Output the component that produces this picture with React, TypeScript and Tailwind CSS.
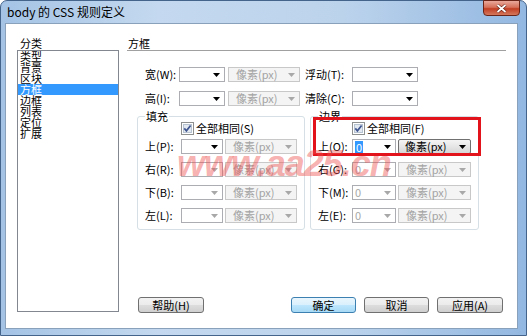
import React from "react";

function Arrow({ dis }: { dis?: boolean }) {
  return (
    <svg width="7" height="4" viewBox="0 0 7 4" className="shrink-0">
      <path d="M0 0H7L3.5 4Z" className={dis ? "fill-[#a8a8a8]" : "fill-black"} />
    </svg>
  );
}

function Combo({
  w,
  value,
  dis,
  sel,
}: {
  w: string;
  value?: string;
  dis?: boolean;
  sel?: boolean;
}) {
  return (
    <div
      className={`${w} h-[15px] border border-[#abadb3] bg-white flex items-center justify-between pl-[2px] pr-[4px] text-[11px] leading-[13px]`}
    >
      {sel ? (
        <span className="bg-[#3399ff] text-white px-[1px] h-[12px] leading-[12px]">0</span>
      ) : (
        <span className={dis ? "text-[#a8a8a8]" : "text-black"}>{value ?? ""}</span>
      )}
      <Arrow dis={dis} />
    </div>
  );
}

function Unit({ w, on }: { w: string; on?: boolean }) {
  return on ? (
    <div
      className={`${w} h-[15px] border border-[#707070] rounded-[2px] bg-[linear-gradient(to_bottom,#f4f4f4,#e6e6e6_50%,#d6d6d6)] flex items-center justify-between pl-[6px] pr-[4px] text-[11px] leading-[13px] text-black`}
    >
      <span>像素(px)</span>
      <Arrow />
    </div>
  ) : (
    <div
      className={`${w} h-[15px] border border-[#c8c8c8] bg-[#f4f4f4] flex items-center justify-between pl-[7px] pr-[4px] text-[11px] leading-[13px] text-[#a3a3a3]`}
    >
      <span>像素(px)</span>
      <Arrow dis />
    </div>
  );
}

function Check() {
  return (
    <svg width="13" height="13" viewBox="0 0 13 13" className="shrink-0">
      <rect x="0.5" y="0.5" width="12" height="12" fill="#fff" stroke="#8e8f8f" />
      <rect x="2.5" y="2.5" width="8" height="8" fill="#e3e9f0" stroke="#b7c3d1" />
      <path d="M3.3 6.4 L5.4 8.8 L9.6 3.4" stroke="#3f5590" strokeWidth="1.7" fill="none" />
    </svg>
  );
}

function Btn({ label, def }: { label: string; def?: boolean }) {
  return (
    <div
      className={`h-[16px] flex items-center justify-center rounded-[3px] border text-[11px] leading-[13px] text-black ${
        def
          ? "border-[#3c7fb1] bg-[linear-gradient(to_bottom,#eaf6fd,#d9f0fc_50%,#bee6fd_51%,#a7d9f5)]"
          : "border-[#707070] bg-[linear-gradient(to_bottom,#f2f2f2,#ebebeb_50%,#dddddd_51%,#cfcfcf)]"
      }`}
    >
      {label}
    </div>
  );
}

export default function App() {
  const items = ["类型", "背景", "区块", "方框", "边框", "列表", "定位", "扩展"];
  return (
    <div className="w-[527px] h-[336px] bg-white overflow-hidden font-['Noto_Sans_CJK_SC','Liberation_Sans',sans-serif]">
      <div className="relative w-[527px] h-[336px] flex flex-col rounded-t-[7px] border border-[#44648c] bg-[linear-gradient(to_right,#a4c3e5,#c4d9ef_30%,#bcd3ec_65%,#93b8e1)]">
        {/* title bar */}
        <div className="h-[22px] flex items-start pl-[6px] pr-[6px] shrink-0">
          <div className="pt-[3px] text-[12px] leading-[16px] text-black">body 的 CSS 规则定义</div>
          <div className="ml-auto w-[37px] h-[16px] -mt-px rounded-b-[4px] border border-[#6b2418] bg-[linear-gradient(to_bottom,#e9a99b,#d6705a_45%,#c23f23_55%,#d4785c)] flex items-center justify-center">
            <svg width="11" height="9" viewBox="0 0 11 9">
              <path d="M1.5 1 L9.5 8 M9.5 1 L1.5 8" stroke="#5a1a10" strokeWidth="3" />
              <path d="M1.5 1 L9.5 8 M9.5 1 L1.5 8" stroke="#ffffff" strokeWidth="1.8" />
            </svg>
          </div>
        </div>
        {/* body */}
        <div className="pl-[4px] pr-[8px] pb-[6px] flex-1 flex">
          <div className="flex-1 bg-white border border-[#8aa1bb] flex pl-[11px] pt-[12px]">
            {/* left */}
            <div className="w-[102px] flex flex-col">
              <div className="h-[14px] text-[11px] leading-[14px] pl-[3px] text-black">分类</div>
              <div className="h-[262px] border border-[#828790] bg-white text-[11px] leading-[11px]">
                {items.map((it, i) => (
                  <div
                    key={it}
                    className={`h-[11px] pl-[2px] ${i === 3 ? "bg-[#3399ff] text-white" : "text-black"}`}
                  >
                    {it}
                  </div>
                ))}
              </div>
            </div>
            {/* right */}
            <div className="ml-[8px] w-[379px] h-[277px] flex flex-col text-[11px] leading-[13px] text-black">
              <div className="h-[15px] border-b border-[#a0a0a0] pl-px text-[11px] leading-[14px]">方框</div>
              <div className="mt-[16px] flex items-center pl-[18px] h-[15px]">
                <div className="w-[34px]">宽(W):</div>
                <Combo w="w-[46px]" />
                <div className="ml-[3px]"><Unit w="w-[72px]" /></div>
                <div className="ml-[5px] w-[47px]">浮动(T):</div>
                <Combo w="w-[66px]" />
              </div>
              <div className="mt-[9px] flex items-center pl-[18px] h-[15px]">
                <div className="w-[34px]">高(I):</div>
                <Combo w="w-[46px]" />
                <div className="ml-[3px]"><Unit w="w-[72px]" /></div>
                <div className="ml-[5px] w-[47px]">清除(C):</div>
                <Combo w="w-[66px]" />
              </div>
              <div className="mt-[4px] ml-[10px] flex gap-[5px]">
                {/* padding */}
                <fieldset className="w-[165px] border border-[#d5dfe5] rounded-[3px] px-[7px] pb-[6px]">
                  <legend className="px-[1px] text-[11px] leading-[12px]">填充</legend>
                  <div className="h-[13px] flex items-center pl-[36px] gap-[2px]">
                    <Check />
                    <span>全部相同(S)</span>
                  </div>
                  <div className="mt-[4px] flex flex-col gap-[8px]">
                    {[
                      ["上(P):", false],
                      ["右(R):", true],
                      ["下(B):", true],
                      ["左(L):", true],
                    ].map(([l, d]) => (
                      <div key={l as string} className="flex items-center h-[15px]">
                        <div className="w-[36px]">{l as string}</div>
                        <Combo w="w-[42px]" dis={d as boolean} />
                        <div className="ml-[2px]"><Unit w="w-[72px]" /></div>
                      </div>
                    ))}
                  </div>
                </fieldset>
                {/* margin */}
                <fieldset className="w-[165px] border border-[#d5dfe5] rounded-[3px] px-[7px] pb-[6px]">
                  <legend className="px-[1px] text-[11px] leading-[12px]">边界</legend>
                  <div className="relative">
                    <div className="h-[13px] flex items-center pl-[34px] gap-[2px]">
                      <Check />
                      <span>全部相同(F)</span>
                    </div>
                    <div className="mt-[4px] flex items-center h-[15px]">
                      <div className="w-[34px]">上(O):</div>
                      <Combo w="w-[44px]" sel />
                      <div className="ml-[2px]"><Unit w="w-[73px]" on /></div>
                    </div>
                    <div className="absolute left-[-5px] top-[-5px] w-[168px] h-[39px] border-[3px] border-[#e3131b] pointer-events-none" />
                  </div>
                  <div className="mt-[8px] flex flex-col gap-[8px]">
                    {["右(G):", "下(M):", "左(E):"].map((l) => (
                      <div key={l} className="flex items-center h-[15px]">
                        <div className="w-[34px]">{l}</div>
                        <Combo w="w-[44px]" value="0" dis />
                        <div className="ml-[2px]"><Unit w="w-[73px]" /></div>
                      </div>
                    ))}
                  </div>
                </fieldset>
              </div>
              <div className="mt-auto flex pl-[11px] pr-[3px]">
                <div className="w-[66px]"><Btn label="帮助(H)" /></div>
                <div className="ml-auto flex gap-[8px]">
                  <div className="w-[65px]"><Btn label="确定" def /></div>
                  <div className="w-[65px]"><Btn label="取消" /></div>
                  <div className="w-[66px]"><Btn label="应用(A)" /></div>
                </div>
              </div>
            </div>
          </div>
        </div>
        {/* watermark */}
        <div className="absolute left-[176px] top-[145px] text-[36px] leading-[36px] font-bold italic tracking-[-1px] font-['Liberation_Sans',sans-serif] text-[rgba(238,80,80,0.45)] pointer-events-none whitespace-nowrap">
          www.aa25.cn
        </div>
      </div>
    </div>
  );
}
